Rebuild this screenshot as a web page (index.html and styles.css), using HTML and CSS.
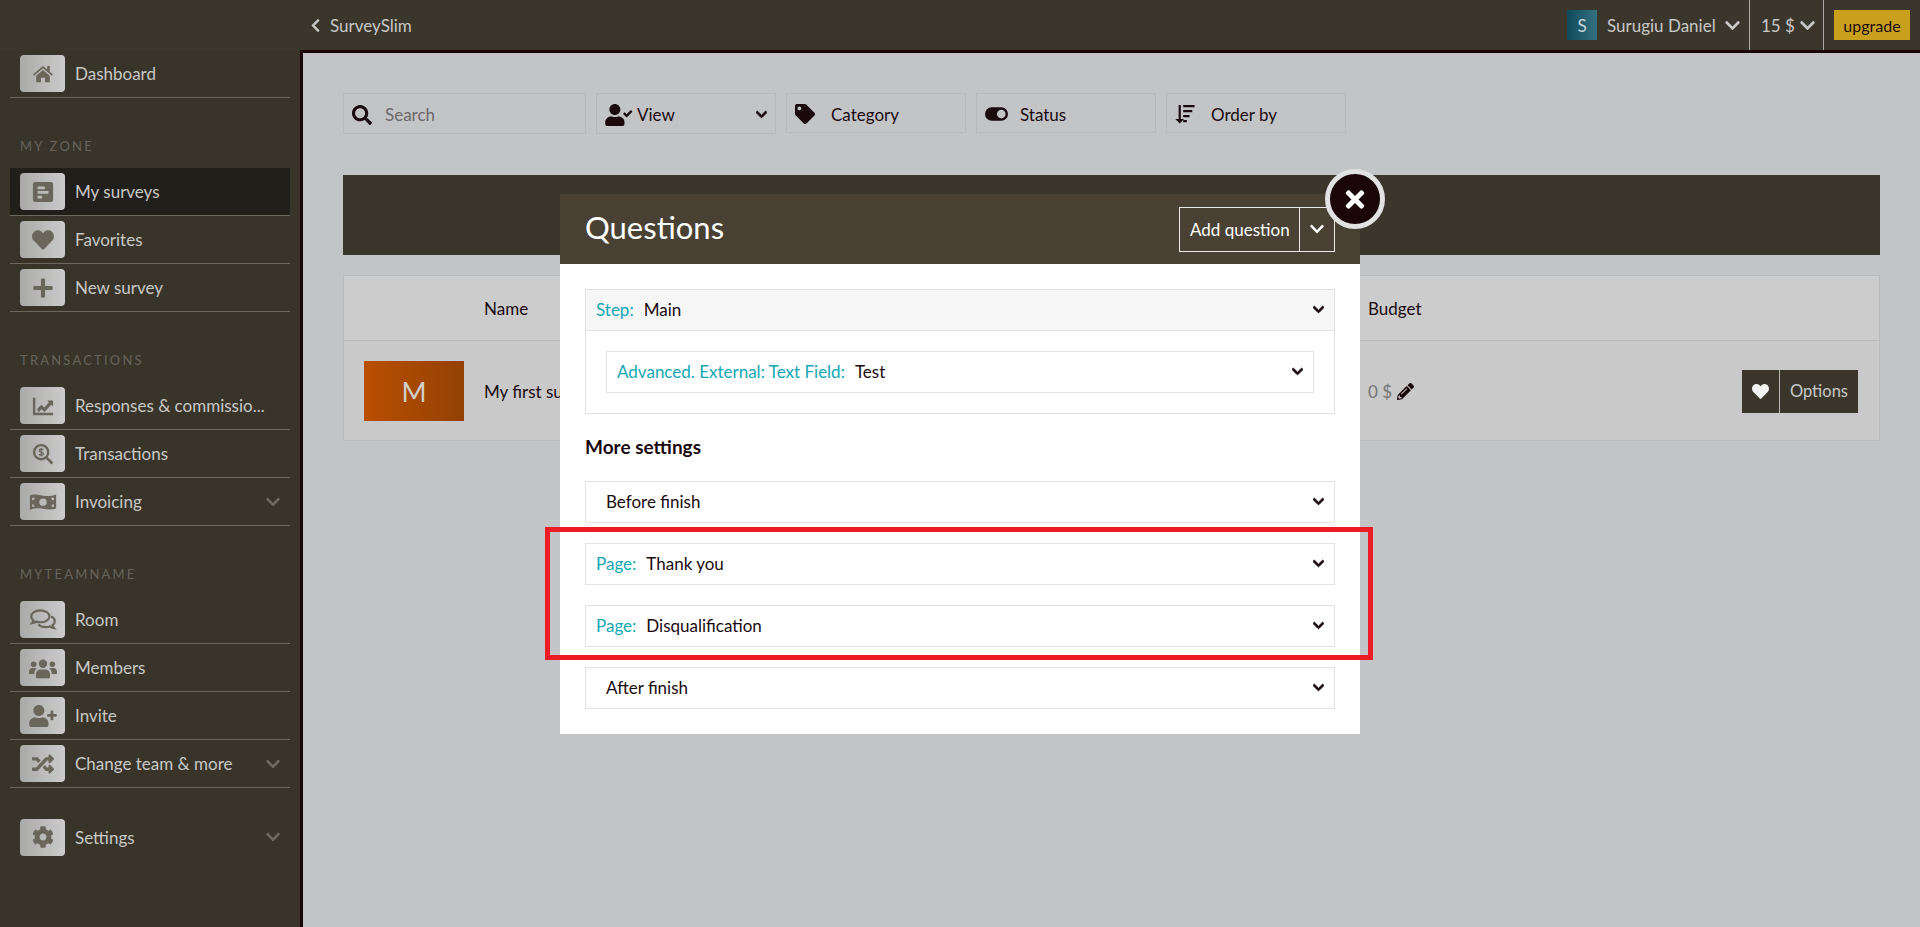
FILE: index.html
```html
<!DOCTYPE html>
<html lang="en">
<head>
  <meta charset="UTF-8" />
  <title>SurveySlim</title>
  <link rel="stylesheet" href="styles.css">
</head>
<body>
  <header class="topbar">
    <a class="back">
      <svg class="ico-back" viewBox="0 0 320 512"><path d="M34.5 239L228.9 44.7c9.4-9.4 24.6-9.4 33.9 0l22.7 22.7c9.4 9.4 9.4 24.5 0 33.9L131.5 256l154 154.8c9.3 9.4 9.3 24.5 0 33.9l-22.7 22.7c-9.4 9.4-24.6 9.4-33.9 0L34.5 273c-9.4-9.4-9.4-24.6 0-34z"/></svg>
      SurveySlim
    </a>
    <div class="top-right">
      <span class="avatar">S</span>
      <span class="top-user">Surugiu Daniel</span>
      <svg class="ico-top-chev" viewBox="0 0 448 512"><path d="M207.029 381.476L12.686 187.132c-9.373-9.373-9.373-24.569 0-33.941l22.667-22.667c9.357-9.357 24.522-9.375 33.901-.04L224 284.505l154.745-154.021c9.379-9.335 24.544-9.317 33.901.04l22.667 22.667c9.373 9.373 9.373 24.569 0 33.941L240.971 381.476c-9.373 9.372-24.569 9.372-33.942 0z"/></svg>
      <span class="top-money">15 $
        <svg class="ico-top-chev" viewBox="0 0 448 512"><path d="M207.029 381.476L12.686 187.132c-9.373-9.373-9.373-24.569 0-33.941l22.667-22.667c9.357-9.357 24.522-9.375 33.901-.04L224 284.505l154.745-154.021c9.379-9.335 24.544-9.317 33.901.04l22.667 22.667c9.373 9.373 9.373 24.569 0 33.941L240.971 381.476c-9.373 9.372-24.569 9.372-33.942 0z"/></svg>
      </span>
      <a class="upgrade">upgrade</a>
    </div>
  </header>

  <div class="layout">
    <nav class="sidebar">
      <a class="nav-item">
        <span class="nav-icon"><svg viewBox="0 0 24 24"><path d="M12 3.2 1 12.6l1.2 1.4L12 5.8l9.800 8.200 1.200-1.400-3.600-3V3.400h-2.800v3.800z"/><path d="M12 7.600 4.600 13.800V21h5.200v-5h4.400v5h5.200v-7.200z"/></svg></span>
        <span class="nav-text">Dashboard</span>
      </a>

      <div class="nav-label">MY ZONE</div>
      <a class="nav-item active">
        <span class="nav-icon"><svg viewBox="0 0 24 24"><path fill-rule="evenodd" d="M3.500 1h17A2.500 2.500 0 0 1 23 3.500v17a2.500 2.500 0 0 1-2.500 2.500h-17A2.500 2.500 0 0 1 1 20.500v-17A2.500 2.500 0 0 1 3.500 1zM6 6v3h8V6zm0 5v3h12v-3zm0 5v3h5v-3z"/></svg></span>
        <span class="nav-text">My surveys</span>
      </a>
      <a class="nav-item">
        <span class="nav-icon"><svg viewBox="0 0 512 512"><path d="M462.300 62.600C407.500 15.900 326 24.300 275.700 76.200L256 96.500l-19.700-20.300C186.100 24.300 104.500 15.900 49.700 62.600c-62.800 53.600-66.100 149.800-9.900 207.900l193.500 199.800c12.500 12.900 32.800 12.900 45.300 0l193.500-199.800c56.300-58.100 53-154.300-9.800-207.900z"/></svg></span>
        <span class="nav-text">Favorites</span>
      </a>
      <a class="nav-item">
        <span class="nav-icon"><svg viewBox="0 0 448 512"><path d="M416 208H272V64c0-17.670-14.330-32-32-32h-32c-17.670 0-32 14.330-32 32v144H32c-17.670 0-32 14.330-32 32v32c0 17.670 14.330 32 32 32h144v144c0 17.670 14.330 32 32 32h32c17.670 0 32-14.330 32-32V304h144c17.670 0 32-14.330 32-32v-32c0-17.670-14.330-32-32-32z"/></svg></span>
        <span class="nav-text">New survey</span>
      </a>

      <div class="nav-label">TRANSACTIONS</div>
      <a class="nav-item">
        <span class="nav-icon"><svg viewBox="0 0 24 24"><path d="M1 3h2.600v16.400H23V22H1z"/><path d="M5.500 15.500 10 10.500l3.500 3 5-5.500-2-2H23v6.500l-2-2-7.300 8-3.500-3-2.900 3.200z"/></svg></span>
        <span class="nav-text">Responses &amp; commissio...</span>
      </a>
      <a class="nav-item">
        <span class="nav-icon"><svg viewBox="0 0 24 24"><path fill-rule="evenodd" d="M10 1a9 9 0 1 1 0 18 9 9 0 0 1 0-18zm0 2.600a6.400 6.400 0 1 0 0 12.800 6.400 6.400 0 0 0 0-12.800z"/><path d="m16 14.200 7.200 7.200-2 2-7.200-7.200z"/><path fill="none" stroke="currentColor" stroke-width="1.300" d="M12.300 7.800c-.5-.8-1.300-1.100-2.300-1.100-1.200 0-2.200.6-2.200 1.600 0 2.300 4.600 1 4.600 3.300 0 1-1 1.700-2.400 1.700-1 0-1.900-.4-2.400-1.200M10 5.400v9.200"/></svg></span>
        <span class="nav-text">Transactions</span>
      </a>
      <a class="nav-item">
        <span class="nav-icon nav-icon-wide"><svg viewBox="0 0 32 22"><path fill-rule="evenodd" d="M1 3.500c5-2 10-.5 15 .3s10 .6 15-1.300v16c-5 2-10 1-15 .2s-10-.6-15 1.300zM16 7a4 4 0 1 0 0 8.400A4 4 0 0 0 16 7zM3.500 6v3A3 3 0 0 0 6.500 6zm22 0a3 3 0 0 0 3 3V6zm-22 7.500v3h3a3 3 0 0 0-3-3zm25 0a3 3 0 0 0-3 3h3z"/></svg></span>
        <span class="nav-text">Invoicing</span>
        <svg class="nav-chev" viewBox="0 0 448 512"><path d="M207.029 381.476L12.686 187.132c-9.373-9.373-9.373-24.569 0-33.941l22.667-22.667c9.357-9.357 24.522-9.375 33.901-.04L224 284.505l154.745-154.021c9.379-9.335 24.544-9.317 33.901.04l22.667 22.667c9.373 9.373 9.373 24.569 0 33.941L240.971 381.476c-9.373 9.372-24.569 9.372-33.942 0z"/></svg>
      </a>

      <div class="nav-label">MYTEAMNAME</div>
      <a class="nav-item">
        <span class="nav-icon nav-icon-wide"><svg class="ico-outline" viewBox="0 0 26 24"><path d="M10.500 3C5.800 3 2 5.500 2 8.700c0 1.500.8 2.800 2.200 3.800-.3 1-.9 1.800-1.500 2.500 1.500-.2 3-.8 4-1.500 1.200.4 2.400.6 3.800.6 4.700 0 8.500-2.400 8.500-5.400S15.200 3 10.500 3z"/><path d="M20.500 8.800c2.100.9 3.500 2.500 3.500 4.400 0 1.500-.8 2.800-2.200 3.700.2 1 .9 1.900 1.500 2.600-1.500-.2-3-.8-4-1.500-1.200.4-2.400.6-3.800.6-2.900 0-5.400-1-6.900-2.500"/></svg></span>
        <span class="nav-text">Room</span>
      </a>
      <a class="nav-item">
        <span class="nav-icon nav-icon-wide"><svg viewBox="0 0 30 22"><circle cx="15" cy="6.500" r="4.500"/><circle cx="5" cy="7" r="3"/><circle cx="25" cy="7" r="3"/><path d="M7.500 21v-3.500c0-3 2.500-5 5-5h5c2.500 0 5 2 5 5V21a1 1 0 0 1-1 1h-13a1 1 0 0 1-1-1z"/><path d="M0 15c0-2 1.500-4 3.500-4h3c.6 0 1.200.2 1.800.6C6.600 13 5.700 15 5.600 17.500H1a1 1 0 0 1-1-1zM30 15c0-2-1.500-4-3.500-4h-3c-.6 0-1.200.2-1.800.6 1.700 1.400 2.600 3.400 2.700 5.900H29a1 1 0 0 0 1-1z"/></svg></span>
        <span class="nav-text">Members</span>
      </a>
      <a class="nav-item">
        <span class="nav-icon nav-icon-wide"><svg viewBox="0 0 640 512"><path d="M624 208h-64v-64c0-8.800-7.200-16-16-16h-32c-8.800 0-16 7.200-16 16v64h-64c-8.800 0-16 7.200-16 16v32c0 8.800 7.200 16 16 16h64v64c0 8.800 7.200 16 16 16h32c8.800 0 16-7.200 16-16v-64h64c8.800 0 16-7.200 16-16v-32c0-8.800-7.200-16-16-16zm-400 48c70.700 0 128-57.300 128-128S294.700 0 224 0 96 57.300 96 128s57.300 128 128 128zm89.600 32h-16.700c-22.200 10.200-46.900 16-72.900 16s-50.600-5.800-72.900-16h-16.700C60.200 288 0 348.200 0 422.400V464c0 26.500 21.500 48 48 48h352c26.500 0 48-21.500 48-48v-41.600c0-74.200-60.200-134.400-134.400-134.400z"/></svg></span>
        <span class="nav-text">Invite</span>
      </a>
      <a class="nav-item">
        <span class="nav-icon"><svg viewBox="0 0 512 512"><path d="M504.971 359.029c9.373 9.373 9.373 24.569 0 33.941l-80 79.984c-15.010 15.010-40.971 4.490-40.971-16.971V416h-58.785a12.004 12.004 0 0 1-8.773-3.812l-70.556-75.596 53.333-57.143L352 336h32v-39.981c0-21.438 25.943-31.998 40.971-16.971l80 79.981zM12 176h84l52.781 56.551 53.333-57.143-70.556-75.596A11.999 11.999 0 0 0 122.785 96H12c-6.627 0-12 5.373-12 12v56c0 6.627 5.373 12 12 12zm372 0v39.984c0 21.460 25.961 31.980 40.971 16.971l80-79.984c9.373-9.373 9.373-24.569 0-33.941l-80-79.981C409.943 24.021 384 34.582 384 56.019V96h-58.785a12.004 12.004 0 0 0-8.773 3.812L96 336H12c-6.627 0-12 5.373-12 12v56c0 6.627 5.373 12 12 12h110.785c3.326 0 6.503-1.381 8.773-3.812L352 176h32z"/></svg></span>
        <span class="nav-text">Change team &amp; more</span>
        <svg class="nav-chev" viewBox="0 0 448 512"><path d="M207.029 381.476L12.686 187.132c-9.373-9.373-9.373-24.569 0-33.941l22.667-22.667c9.357-9.357 24.522-9.375 33.901-.04L224 284.505l154.745-154.021c9.379-9.335 24.544-9.317 33.901.04l22.667 22.667c9.373 9.373 9.373 24.569 0 33.941L240.971 381.476c-9.373 9.372-24.569 9.372-33.942 0z"/></svg>
      </a>
      <a class="nav-item nav-settings">
        <span class="nav-icon"><svg viewBox="0 0 512 512"><path d="M487.400 315.700l-42.600-24.600c4.300-23.200 4.300-47 0-70.200l42.600-24.600c4.900-2.800 7.100-8.600 5.500-14-11.100-35.600-30-67.800-54.700-94.600-3.800-4.100-10-5.100-14.800-2.300L380.800 110c-17.900-15.400-38.500-27.300-60.800-35.100V25.800c0-5.600-3.900-10.500-9.400-11.700-36.700-8.200-74.300-7.800-109.200 0-5.500 1.200-9.400 6.100-9.400 11.700V75c-22.200 7.900-42.800 19.800-60.800 35.100L88.700 85.500c-4.900-2.800-11-1.900-14.800 2.300-24.700 26.700-43.600 58.900-54.700 94.600-1.700 5.400.6 11.200 5.500 14L67.300 221c-4.300 23.200-4.300 47 0 70.200l-42.600 24.600c-4.900 2.800-7.100 8.600-5.500 14 11.100 35.600 30 67.800 54.700 94.600 3.800 4.100 10 5.100 14.800 2.300l42.600-24.600c17.900 15.400 38.500 27.300 60.800 35.100v49.200c0 5.600 3.900 10.500 9.400 11.700 36.700 8.200 74.300 7.800 109.200 0 5.500-1.200 9.400-6.100 9.400-11.700v-49.200c22.200-7.900 42.800-19.800 60.800-35.100l42.600 24.600c4.900 2.800 11 1.900 14.800-2.300 24.700-26.700 43.600-58.900 54.700-94.600 1.500-5.500-.7-11.300-5.600-14.100zM256 336c-44.100 0-80-35.900-80-80s35.900-80 80-80 80 35.900 80 80-35.900 80-80 80z"/></svg></span>
        <span class="nav-text">Settings</span>
        <svg class="nav-chev" viewBox="0 0 448 512"><path d="M207.029 381.476L12.686 187.132c-9.373-9.373-9.373-24.569 0-33.941l22.667-22.667c9.357-9.357 24.522-9.375 33.901-.04L224 284.505l154.745-154.021c9.379-9.335 24.544-9.317 33.901.04l22.667 22.667c9.373 9.373 9.373 24.569 0 33.941L240.971 381.476c-9.373 9.372-24.569 9.372-33.942 0z"/></svg>
      </a>
    </nav>

    <main class="content">
      <div class="toolbar">
        <div class="tool tool-search">
          <svg class="tool-ico" viewBox="0 0 512 512"><path d="M505 442.700L405.300 343c-4.500-4.500-10.600-7-17-7H372c27.600-35.300 44-79.700 44-128C416 93.100 322.900 0 208 0S0 93.100 0 208s93.100 208 208 208c48.300 0 92.700-16.400 128-44v16.300c0 6.400 2.500 12.500 7 17l99.700 99.700c9.400 9.400 24.600 9.400 33.900 0l28.300-28.300c9.400-9.400 9.400-24.600.1-34zM208 336c-70.700 0-128-57.200-128-128 0-70.700 57.200-128 128-128 70.700 0 128 57.200 128 128 0 70.700-57.200 128-128 128z"/></svg>
          <span class="placeholder">Search</span>
        </div>
        <div class="tool tool-view">
          <svg class="tool-ico-wide" viewBox="0 0 640 512"><path d="M224 256c70.700 0 128-57.300 128-128S294.700 0 224 0 96 57.300 96 128s57.300 128 128 128zm89.600 32h-16.700c-22.200 10.200-46.900 16-72.900 16s-50.600-5.800-72.900-16h-16.700C60.200 288 0 348.200 0 422.400V464c0 26.500 21.500 48 48 48h352c26.500 0 48-21.500 48-48v-41.600c0-74.200-60.200-134.400-134.400-134.400z"/><path d="m627 170-24-24c-4-4-11-4-15 0l-90 90-39-39c-4-4-11-4-15 0l-24 24c-4 4-4 11 0 15l71 71c4 4 11 4 15 0l121-122c4-4 4-11 0-15z"/></svg>
          <span>View</span>
          <svg class="chev-sm" viewBox="0 0 448 512"><path d="M207.029 381.476L12.686 187.132c-9.373-9.373-9.373-24.569 0-33.941l22.667-22.667c9.357-9.357 24.522-9.375 33.901-.04L224 284.505l154.745-154.021c9.379-9.335 24.544-9.317 33.901.04l22.667 22.667c9.373 9.373 9.373 24.569 0 33.941L240.971 381.476c-9.373 9.372-24.569 9.372-33.942 0z"/></svg>
        </div>
        <div class="tool">
          <svg class="tool-ico" viewBox="0 0 512 512"><path d="M0 252.118V48C0 21.490 21.490 0 48 0h204.118a48 48 0 0 1 33.941 14.059l211.882 211.882c18.745 18.745 18.745 49.137 0 67.882L293.823 497.941c-18.745 18.745-49.137 18.745-67.882 0L14.059 286.059A48 48 0 0 1 0 252.118zM112 64c-26.510 0-48 21.490-48 48s21.490 48 48 48 48-21.490 48-48-21.490-48-48-48z"/></svg>
          <span>Category</span>
        </div>
        <div class="tool">
          <svg class="tool-ico-toggle" viewBox="0 0 24 14"><path fill-rule="evenodd" d="M7 0h10a7 7 0 0 1 0 14H7A7 7 0 0 1 7 0zm10 2.500a4.500 4.500 0 1 0 0 9 4.500 4.500 0 0 0 0-9z"/></svg>
          <span>Status</span>
        </div>
        <div class="tool">
          <svg class="tool-ico" viewBox="0 0 22 22"><path d="M4 1h2.400v15.500H10L5.200 21.500.4 16.500H4z"/><path d="M9 1h12.500v2.600H9zM9 6.500h10v2.600H9zM9 12h7v2.600H9zM9 17.500h4v2.600H9z"/></svg>
          <span>Order by</span>
        </div>
      </div>

      <div class="banner"></div>

      <div class="list">
        <div class="list-row list-head">
          <span></span>
          <span>Name</span>
          <span>Budget</span>
        </div>
        <div class="list-row list-item">
          <span class="thumb">M</span>
          <span>My first survey</span>
          <span class="budget">0 $
            <svg class="ico-pencil" viewBox="0 0 512 512"><path d="M497.900 142.100l-46.100 46.100c-4.700 4.700-12.300 4.700-17 0l-111-111c-4.700-4.700-4.700-12.300 0-17l46.100-46.100c18.700-18.700 49.100-18.700 67.900 0l60.100 60.100c18.800 18.700 18.800 49.100 0 67.900zM284.200 99.800L21.600 362.400.4 483.900c-2.900 16.400 11.400 30.600 27.800 27.800l121.500-21.300 262.600-262.600c4.700-4.700 4.700-12.300 0-17l-111-111c-4.800-4.700-12.400-4.700-17.100 0zM124.100 339.900c-5.500-5.500-5.500-14.300 0-19.800l154-154c5.500-5.500 14.300-5.500 19.800 0s5.500 14.300 0 19.800l-154 154c-5.500 5.500-14.300 5.500-19.800 0zM88 424h48v36.300l-64.500 11.300-31.100-31.100L51.700 376H88v48z"/></svg>
          </span>
          <span class="options">
            <span class="opt-heart"><svg viewBox="0 0 512 512"><path d="M462.300 62.600C407.500 15.900 326 24.300 275.700 76.200L256 96.500l-19.700-20.300C186.100 24.300 104.500 15.900 49.700 62.600c-62.800 53.600-66.100 149.800-9.900 207.900l193.500 199.800c12.500 12.900 32.800 12.900 45.300 0l193.500-199.800c56.300-58.100 53-154.300-9.800-207.900z"/></svg></span>
            <span class="opt-text">Options</span>
          </span>
        </div>
      </div>
    </main>
  </div>

  <div class="overlay">
    <section class="modal">
      <a class="modal-close"><svg viewBox="0 0 352 512"><path d="M242.720 256l100.070-100.070c12.280-12.280 12.280-32.190 0-44.480l-22.240-22.240c-12.280-12.280-32.190-12.280-44.480 0L176 189.280 75.930 89.210c-12.280-12.280-32.190-12.280-44.480 0L9.210 111.450c-12.280 12.280-12.280 32.190 0 44.480L109.280 256 9.210 356.070c-12.280 12.280-12.280 32.190 0 44.480l22.240 22.240c12.280 12.280 32.200 12.280 44.480 0L176 322.720l100.070 100.070c12.280 12.280 32.200 12.280 44.480 0l22.240-22.240c12.280-12.280 12.280-32.190 0-44.480L242.720 256z"/></svg></a>
      <div class="modal-head">
        <h2>Questions</h2>
        <div class="add-btn">
          <span class="add-text">Add question</span>
          <span class="add-chev"><svg viewBox="0 0 448 512"><path d="M207.029 381.476L12.686 187.132c-9.373-9.373-9.373-24.569 0-33.941l22.667-22.667c9.357-9.357 24.522-9.375 33.901-.04L224 284.505l154.745-154.021c9.379-9.335 24.544-9.317 33.901.04l22.667 22.667c9.373 9.373 9.373 24.569 0 33.941L240.971 381.476c-9.373 9.372-24.569 9.372-33.942 0z"/></svg></span>
        </div>
      </div>
      <div class="modal-body">
        <div class="step">
          <div class="bar bar-grey">
            <span class="key">Step:</span><span class="val">Main</span>
            <svg class="chev-sm" viewBox="0 0 448 512"><path d="M207.029 381.476L12.686 187.132c-9.373-9.373-9.373-24.569 0-33.941l22.667-22.667c9.357-9.357 24.522-9.375 33.901-.04L224 284.505l154.745-154.021c9.379-9.335 24.544-9.317 33.901.04l22.667 22.667c9.373 9.373 9.373 24.569 0 33.941L240.971 381.476c-9.373 9.372-24.569 9.372-33.942 0z"/></svg>
          </div>
          <div class="step-inner">
            <div class="bar bar-box">
              <span class="key">Advanced. External: Text Field:</span><span class="val">Test</span>
              <svg class="chev-sm" viewBox="0 0 448 512"><path d="M207.029 381.476L12.686 187.132c-9.373-9.373-9.373-24.569 0-33.941l22.667-22.667c9.357-9.357 24.522-9.375 33.901-.04L224 284.505l154.745-154.021c9.379-9.335 24.544-9.317 33.901.04l22.667 22.667c9.373 9.373 9.373 24.569 0 33.941L240.971 381.476c-9.373 9.372-24.569 9.372-33.942 0z"/></svg>
            </div>
          </div>
        </div>

        <h3>More settings</h3>

        <div class="bar bar-box bar-plain">
          <span class="val">Before finish</span>
          <svg class="chev-sm" viewBox="0 0 448 512"><path d="M207.029 381.476L12.686 187.132c-9.373-9.373-9.373-24.569 0-33.941l22.667-22.667c9.357-9.357 24.522-9.375 33.901-.04L224 284.505l154.745-154.021c9.379-9.335 24.544-9.317 33.901.04l22.667 22.667c9.373 9.373 9.373 24.569 0 33.941L240.971 381.476c-9.373 9.372-24.569 9.372-33.942 0z"/></svg>
        </div>
        <div class="bar bar-box">
          <span class="key">Page:</span><span class="val">Thank you</span>
          <svg class="chev-sm" viewBox="0 0 448 512"><path d="M207.029 381.476L12.686 187.132c-9.373-9.373-9.373-24.569 0-33.941l22.667-22.667c9.357-9.357 24.522-9.375 33.901-.04L224 284.505l154.745-154.021c9.379-9.335 24.544-9.317 33.901.04l22.667 22.667c9.373 9.373 9.373 24.569 0 33.941L240.971 381.476c-9.373 9.372-24.569 9.372-33.942 0z"/></svg>
        </div>
        <div class="bar bar-box">
          <span class="key">Page:</span><span class="val">Disqualification</span>
          <svg class="chev-sm" viewBox="0 0 448 512"><path d="M207.029 381.476L12.686 187.132c-9.373-9.373-9.373-24.569 0-33.941l22.667-22.667c9.357-9.357 24.522-9.375 33.901-.04L224 284.505l154.745-154.021c9.379-9.335 24.544-9.317 33.901.04l22.667 22.667c9.373 9.373 9.373 24.569 0 33.941L240.971 381.476c-9.373 9.372-24.569 9.372-33.942 0z"/></svg>
        </div>
        <div class="bar bar-box bar-plain">
          <span class="val">After finish</span>
          <svg class="chev-sm" viewBox="0 0 448 512"><path d="M207.029 381.476L12.686 187.132c-9.373-9.373-9.373-24.569 0-33.941l22.667-22.667c9.357-9.357 24.522-9.375 33.901-.04L224 284.505l154.745-154.021c9.379-9.335 24.544-9.317 33.901.04l22.667 22.667c9.373 9.373 9.373 24.569 0 33.941L240.971 381.476c-9.373 9.372-24.569 9.372-33.942 0z"/></svg>
        </div>
      </div>
      <div class="red-mark"></div>
    </section>
  </div>
</body>
</html>
```

FILE: styles.css
```css
* {
  box-sizing: border-box;
}
html, body {
  height: 100%;
}
body {
  margin: 0;
  overflow: hidden;
  background: #38342a;
  color: #1a0a0e;
  font-family: "Lato", "Noto Sans", sans-serif;
  font-size: 17px;
}
svg {
  display: block;
  fill: currentColor;
}

/* top bar */
.topbar {
  display: flex;
  align-items: center;
  justify-content: space-between;
  height: 50px;
  padding-left: 310px;
  background: #3a362c;
  color: #c8c8c6;
}
.back {
  display: flex;
  align-items: center;
  gap: 9px;
}
.ico-back {
  width: 11px;
  height: 15px;
}
.top-right {
  display: flex;
  align-items: center;
  height: 50px;
  padding-right: 10px;
}
.avatar {
  display: flex;
  align-items: center;
  justify-content: center;
  width: 30px;
  height: 30px;
  margin-right: 10px;
  background: linear-gradient(90deg, #0f4a5c, #35707f);
  color: #c9d6da;
}
.top-user {
  width: 118px;
  white-space: nowrap;
}
.ico-top-chev {
  width: 15px;
  height: 17px;
  margin-right: 9px;
}
.top-money {
  display: flex;
  align-items: center;
  gap: 5px;
  height: 50px;
  width: 75px;
  padding-left: 11px;
  border-left: 1px solid #aaa9a4;
  border-right: 1px solid #aaa9a4;
}
.top-money .ico-top-chev {
  margin-right: 0;
}
.upgrade {
  display: flex;
  align-items: center;
  justify-content: center;
  width: 76px;
  height: 30px;
  margin-left: 10px;
  background: #c9a01e;
  color: #1a0a0e;
  font-size: 16px;
}

/* sidebar */
.layout {
  display: flex;
  height: 877px;
}
.sidebar {
  width: 300px;
  flex: none;
  padding: 0 10px;
  background: #38342a;
  color: #c8c8c4;
}
.nav-item {
  display: flex;
  align-items: center;
  height: 48px;
  padding: 0 10px;
  border-bottom: 1px solid #6b675d;
}
.nav-item.active {
  background: #201f1a;
}
.nav-settings {
  margin-top: 25px;
  border-bottom: 0;
}
.nav-icon {
  display: flex;
  align-items: center;
  justify-content: center;
  flex: none;
  width: 45px;
  height: 37px;
  margin-right: 10px;
  border-radius: 4px;
  background: linear-gradient(90deg, #a9a9a8, #cbcbcb);
  color: #6a665c;
}
.nav-icon svg {
  width: 22px;
  height: 22px;
}
.nav-icon-wide svg {
  width: 28px;
}
.nav-icon .ico-outline {
  height: 26px;
  fill: none;
  stroke: currentColor;
  stroke-width: 2;
}
.nav-text {
  white-space: nowrap;
}
.nav-chev {
  width: 14px;
  height: 16px;
  margin-left: auto;
  color: #6e6b62;
}
.nav-label {
  height: 70px;
  padding: 40px 10px 0;
  color: #66635a;
  font-size: 13px;
  line-height: 16px;
  letter-spacing: 2.2px;
}

/* main area */
.content {
  flex: 1;
  padding: 40px 40px 0;
  background: #c3c4c6;
  border-left: 3px solid #1a0508;
  border-top: 3px solid #1a0508;
}
.toolbar {
  display: flex;
  align-items: flex-start;
  gap: 10px;
}
.tool {
  display: flex;
  align-items: center;
  width: 180px;
  height: 40px;
  padding: 2px 8px 0;
  border: 1px solid #b8b9bb;
}
.tool-search {
  width: 243px;
  height: 41px;
}
.tool-view {
  height: 41px;
}
.tool-ico {
  width: 20px;
  height: 20px;
  margin-right: 16px;
}
.tool-search .tool-ico {
  margin-right: 13px;
}
.tool-ico-wide {
  width: 28px;
  height: 22px;
  margin-right: 4px;
}
.tool-ico-toggle {
  width: 23px;
  height: 14px;
  margin-right: 12px;
}
.placeholder {
  color: #6d686a;
}
.chev-sm {
  width: 11px;
  height: 13px;
  margin-left: auto;
  stroke: currentColor;
  stroke-width: 40;
}
.banner {
  height: 80px;
  margin-top: 41px;
  background: #3a362c;
}
.list {
  margin-top: 20px;
  border: 1px solid #b8b9bb;
  background: #c9c9c9;
}
.list-row {
  display: grid;
  grid-template-columns: 140px 884px 1fr auto;
  align-items: center;
}
.list-head {
  height: 65px;
  background: #cccccc;
  border-bottom: 1px solid #b8b9bb;
}
.list-item {
  height: 99px;
  padding-top: 1px;
}
.thumb {
  display: flex;
  align-items: center;
  justify-content: center;
  width: 100px;
  height: 60px;
  margin-left: 20px;
  background: linear-gradient(90deg, #b94f00, #934104);
  color: #d2cfca;
  font-size: 27px;
}
.budget {
  display: flex;
  align-items: center;
  gap: 5px;
  color: #757575;
}
.ico-pencil {
  width: 17px;
  height: 17px;
  color: #1a0508;
}
.options {
  display: flex;
  height: 43px;
  margin-right: 21px;
  background: #3a362c;
  color: #c8c8c6;
  font-size: 16.5px;
}
.opt-heart {
  display: flex;
  align-items: center;
  justify-content: center;
  width: 38px;
  border-right: 1px solid #b9b9b7;
  color: #f2f2f2;
}
.opt-heart svg {
  width: 17px;
  height: 17px;
}
.opt-text {
  display: flex;
  align-items: center;
  padding: 0 10px;
}

/* modal */
.overlay {
  position: fixed;
  top: 0;
  left: 0;
  right: 0;
  bottom: 0;
  display: flex;
  justify-content: center;
  padding-top: 194px;
}
.modal {
  position: relative;
  width: 800px;
  height: 540px;
  background: #fff;
}
.modal-close {
  position: absolute;
  top: -25px;
  right: -25px;
  z-index: 2;
  display: flex;
  align-items: center;
  justify-content: center;
  width: 60px;
  height: 60px;
  border: 5px solid #e2e2e2;
  border-radius: 50%;
  background: #1a0508;
  color: #fff;
}
.modal-close svg {
  width: 20px;
  height: 27px;
}
.modal-head {
  display: flex;
  align-items: center;
  justify-content: space-between;
  height: 70px;
  padding: 0 25px;
  background: #494133;
  color: #fff;
}
.modal-head h2 {
  margin: 0 0 4px;
  font-size: 31px;
  font-weight: 400;
}
.add-btn {
  display: flex;
  height: 45px;
  border: 1px solid #e8e8e6;
}
.add-text {
  display: flex;
  align-items: center;
  width: 120px;
  padding-left: 10px;
  border-right: 1px solid #e8e8e6;
}
.add-chev {
  display: flex;
  align-items: center;
  justify-content: center;
  width: 34px;
}
.add-chev svg {
  width: 14px;
  height: 16px;
}
.modal-body {
  padding: 25px 25px 0;
}
.step {
  height: 125px;
  border: 1px solid #e2e2e2;
}
.bar {
  display: flex;
  align-items: center;
  height: 42px;
  padding: 0 10px 2px;
}
.bar-grey {
  height: 41px;
  background: #f6f6f6;
  border-bottom: 1px solid #e2e2e2;
}
.bar-box {
  margin-bottom: 20px;
  border: 1px solid #e2e2e2;
}
.bar-plain {
  padding-left: 20px;
}
.step-inner {
  padding: 20px 20px 0;
}
.step-inner .bar-box {
  margin-bottom: 0;
}
.key {
  margin-right: 10px;
  color: #11a8b4;
}
.modal-body h3 {
  margin: 0;
  height: 67px;
  line-height: 66px;
  font-size: 19px;
  font-weight: 700;
}
.red-mark {
  position: absolute;
  top: 333px;
  left: -15px;
  width: 828px;
  height: 133px;
  border: 5px solid #ed1c24;
}
```
